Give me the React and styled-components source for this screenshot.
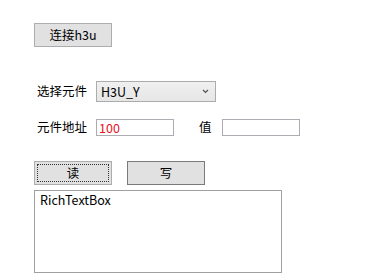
import React from "react";
import styled, { createGlobalStyle } from "styled-components";

const Global = createGlobalStyle`
  html, body { margin: 0; padding: 0; background: #fff; }
  body { font-family: "Noto Sans CJK SC", "Noto Sans", sans-serif; font-size: 12px; color: #000; }
  * { box-sizing: border-box; }
`;

const Page = styled.div`
  width: 373px;
  height: 279px;
  padding: 23px 0 0 34px;
  display: flex;
  flex-direction: column;
  align-items: flex-start;
`;

const Button = styled.div`
  width: 78px;
  height: 24px;
  background: #e1e1e1;
  border: 1px solid ${(p) => p.$border || "#adadad"};
  display: flex;
  align-items: center;
  justify-content: center;
  font-size: 12.5px;
  line-height: 1;
  position: relative;
`;

const FocusRect = styled.div`
  position: absolute;
  inset: 2px;
  border: 1px dotted #333;
`;

const Row = styled.div`
  display: flex;
  align-items: center;
  margin-top: ${(p) => p.$top}px;
`;

const Label = styled.span`
  width: ${(p) => p.$w}px;
  padding-left: ${(p) => p.$pl || 0}px;
  font-size: 12.5px;
  line-height: 1;
  white-space: nowrap;
`;

const Combo = styled.div`
  width: 120px;
  height: 21px;
  border: 1px solid #acacac;
  background: linear-gradient(#f0f0f0, #e6e6e6);
  display: flex;
  align-items: center;
  justify-content: space-between;
  padding: 0 6px 0 4px;
  font-size: 12.5px;
`;

const Input = styled.div`
  width: ${(p) => p.$w}px;
  height: 17px;
  border: 1px solid #abadb3;
  background: #fff;
  color: #e81123;
  display: flex;
  align-items: center;
  padding-left: 2px;
  font-size: 12.5px;
`;

const ButtonRow = styled.div`
  display: flex;
  gap: 15px;
  margin-top: 25px;
`;

const RichBox = styled.div`
  width: 248px;
  height: 83px;
  margin-top: 5px;
  border: 1px solid #a0a0a0;
  padding: 2px 0 0 5px;
  font-size: 12.5px;
  line-height: 1.1;
`;

const Chevron = () => (
  <svg width="7" height="5" viewBox="0 0 7 5">
    <path d="M1 1 L3.5 3.5 L6 1" fill="none" stroke="#555" strokeWidth="1.2" />
  </svg>
);

export default function App() {
  return (
    <>
      <Global />
      <Page>
        <Button>连接h3u</Button>
        <Row $top={34}>
          <Label $w={62} $pl={3}>选择元件</Label>
          <Combo>
            <span>H3U_Y</span>
            <Chevron />
          </Combo>
        </Row>
        <Row $top={17}>
          <Label $w={62} $pl={3}>元件地址</Label>
          <Input $w={78}>100</Input>
          <Label $w={48} $pl={25}>值</Label>
          <Input $w={78} />
        </Row>
        <ButtonRow>
          <Button>
            读
            <FocusRect />
          </Button>
          <Button $border="#7a7a7a">写</Button>
        </ButtonRow>
        <RichBox>RichTextBox</RichBox>
      </Page>
    </>
  );
}
